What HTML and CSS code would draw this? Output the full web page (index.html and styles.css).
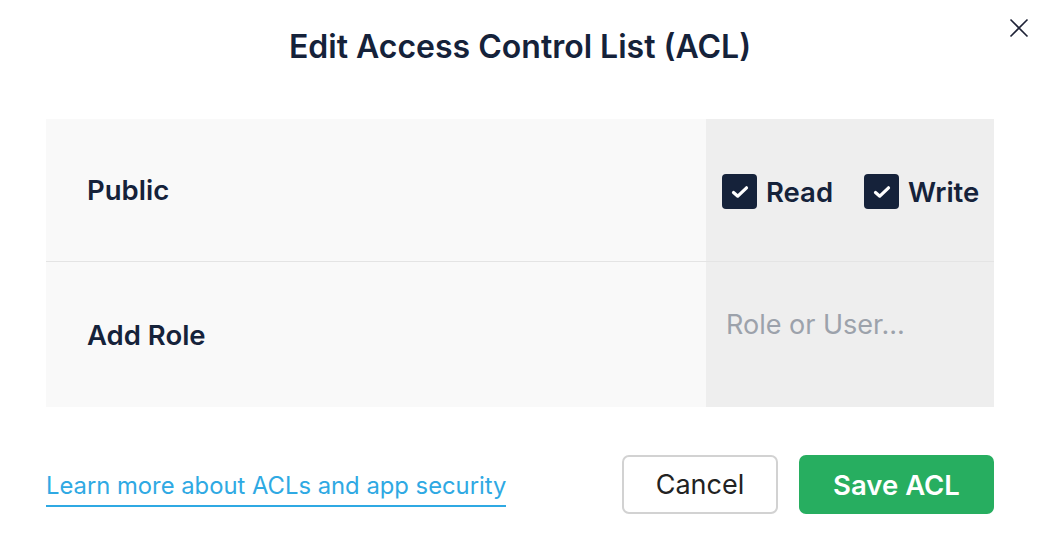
FILE: index.html
```html
<!DOCTYPE html>
<html>
<head>
<meta charset="utf-8">
<link rel="stylesheet" href="styles.css">
</head>
<body>
<div class="modal">
  <button class="close" aria-label="Close">
    <svg width="20" height="20" viewBox="0 0 20 20"><path d="M1.5 1.5 L18.5 18.5 M18.5 1.5 L1.5 18.5" stroke="#1e2236" stroke-width="1.6" fill="none"/></svg>
  </button>
  <h1 class="title">Edit Access Control List (ACL)</h1>
  <div class="table">
    <div class="row">
      <div class="cell-left">Public</div>
      <div class="cell-right perms">
        <label class="check">
          <span class="box"><svg width="18" height="14" viewBox="0 0 18 14"><path d="M2.5 7.5 L6.8 11.2 L15.5 2.8" stroke="#fff" stroke-width="3.2" fill="none" stroke-linecap="round" stroke-linejoin="round"/></svg></span>
          <span>Read</span>
        </label>
        <label class="check">
          <span class="box"><svg width="18" height="14" viewBox="0 0 18 14"><path d="M2.5 7.5 L6.8 11.2 L15.5 2.8" stroke="#fff" stroke-width="3.2" fill="none" stroke-linecap="round" stroke-linejoin="round"/></svg></span>
          <span>Write</span>
        </label>
      </div>
    </div>
    <div class="row last">
      <div class="cell-left">Add Role</div>
      <div class="cell-right role">
        <input class="role-input" type="text" placeholder="Role or User...">
      </div>
    </div>
  </div>
  <div class="footer">
    <a class="learn" href="#">Learn more about ACLs and app security</a>
    <div class="actions">
      <button class="btn cancel">Cancel</button>
      <button class="btn save">Save ACL</button>
    </div>
  </div>
</div>
</body>
</html>
```

FILE: styles.css
```css
* { box-sizing: border-box; }
html, body { margin: 0; padding: 0; background: #fff; }
body {
  font-family: Inter, "Noto Sans", sans-serif;
  color: #15223a;
  width: 1046px;
  height: 544px;
  overflow: hidden;
}
.modal {
  position: relative;
  padding: 0 52px 0 46px;
}
.close {
  position: absolute;
  top: 18px;
  right: 17px;
  border: 0;
  background: none;
  padding: 0;
  width: 20px;
  height: 20px;
  cursor: pointer;
}
.title {
  margin: 0;
  height: 119px;
  padding-top: 26px;
  text-align: center;
  font-size: 32px;
  font-weight: 600;
  line-height: 42px;
  color: #15223a;
}
.table {
  width: 948px;
}
.row {
  display: flex;
  height: 143px;
  border-bottom: 1px solid #e4e4e4;
}
.row.last {
  height: 145px;
  border-bottom: 0;
}
.cell-left {
  width: 660px;
  background: #f9f9f9;
  display: flex;
  align-items: center;
  padding-left: 41px;
  font-size: 27.5px;
  font-weight: 600;
}
.cell-right {
  width: 288px;
  background: #eeeeee;
}
.perms {
  display: flex;
  align-items: center;
  padding-left: 16px;
  padding-top: 3px;
  gap: 31px;
}
.check {
  display: flex;
  align-items: center;
  gap: 9px;
  font-size: 27.5px;
  font-weight: 600;
}
.box {
  width: 35px;
  height: 35px;
  background: #15223a;
  border-radius: 4px;
  display: flex;
  align-items: center;
  justify-content: center;
}
.role {
  padding: 43px 0 0 20px;
}
.role-input {
  width: 260px;
  border: 0;
  background: transparent;
  font-family: Inter, "Noto Sans", sans-serif;
  font-size: 27px;
  padding: 0;
  height: 38px;
  outline: none;
  color: #15223a;
}
.role-input::placeholder { color: #9ca2ab; }
.footer {
  width: 948px;
  display: flex;
  justify-content: space-between;
  align-items: center;
  margin-top: 48px;
}
.learn {
  font-size: 23.8px;
  color: #2fa9e3;
  text-decoration: none;
  border-bottom: 2px solid #2fa9e3;
  padding-bottom: 4px;
  margin-top: 8px;
  line-height: 30px;
}
.actions {
  display: flex;
  gap: 21px;
}
.btn {
  height: 59px;
  border-radius: 7px;
  font-family: Inter, "Noto Sans", sans-serif;
  font-size: 27px;
  cursor: pointer;
}
.cancel {
  width: 156px;
  background: #fff;
  border: 2px solid #d2d2d2;
  color: #222;
}
.save {
  width: 195px;
  background: #27ae60;
  border: 0;
  color: #fff;
  font-weight: 600;
  font-size: 27.5px;
}
```
